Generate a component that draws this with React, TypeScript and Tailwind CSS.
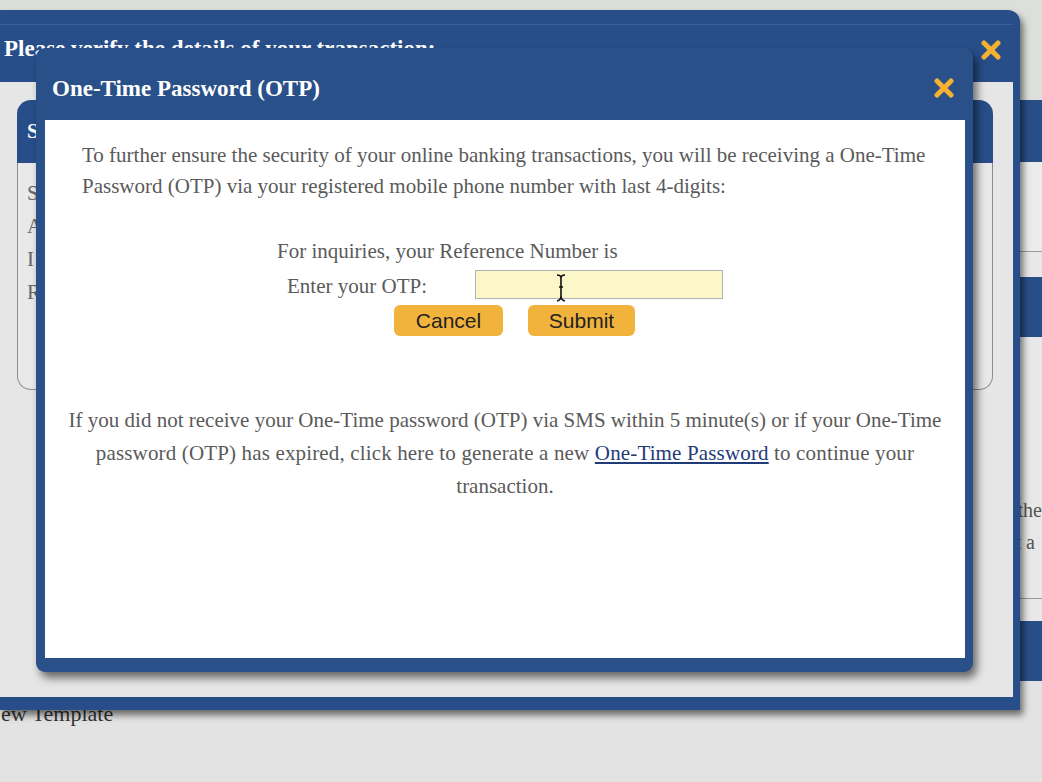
import React from "react";

const serif = { fontFamily: '"Liberation Serif", "Times New Roman", serif' };
const sans = { fontFamily: '"Liberation Sans", Arial, sans-serif' };

function CloseX({ className = "" }: { className?: string }) {
  return (
    <svg width="22" height="20" viewBox="0 0 22 20" className={className}>
      <path d="M4 3 L18 17 M18 3 L4 17" stroke="#f3b231" strokeWidth="5" strokeLinecap="round" />
    </svg>
  );
}

export default function App() {
  return (
    <div className="relative w-[1042px] h-[782px] overflow-hidden bg-[#e3e3e3]" style={serif}>
      {/* background page */}
      <div className="flex w-full h-full">
        <div className="w-[1022px] flex flex-col">
          <div className="h-[10px] bg-[#dcdfdc]" />
          <div className="mt-[691px] -ml-[15px] text-[22px] text-[#333] leading-[26px] whitespace-nowrap">New Template</div>
        </div>
        <div className="flex-1 flex flex-col">
          <div className="h-[100px] bg-[#dcdfdc]" />
          <div className="h-[62px] bg-[#284e89]" />
          <div className="h-[90px] bg-[#ececec] border-b border-[#9a9a9a]" />
          <div className="h-[25px] bg-[#e8e8e8]" />
          <div className="h-[60px] bg-[#284e89]" />
          <div className="bg-[#e8e8e8]">
            <div className="h-[157px]" />
            <div className="text-[20px] leading-[32px] text-[#555] -ml-[1px] whitespace-nowrap">the</div>
            <div className="text-[20px] leading-[32px] text-[#555] -ml-[3px] whitespace-nowrap">t a</div>
            <div className="h-[41px] border-b border-[#9a9a9a]" />
            <div className="h-[22px]" />
          </div>
          <div className="h-[60px] bg-[#284e89]" />
        </div>
      </div>

      {/* outer dialog */}
      <div className="absolute left-0 top-[10px] w-[1020px] h-[700px] bg-[#284e89] rounded-tr-[12px] flex flex-col pr-[7px] pb-[13px] shadow-[3px_5px_7px_rgba(0,0,0,0.55)]">
        <div className="relative h-[72px] shrink-0">
          <div className="h-[15px] border-b border-[#3d6198]" />
          <div className="pl-[4px] pt-[10px] text-[23px] font-bold text-white leading-[27px] whitespace-nowrap">Please verify the details of your transaction:</div>
          <CloseX className="absolute right-[11px] top-[30px]" />
        </div>
        <div className="flex-1 bg-[#e6e6e6] pt-[18px] pl-[17px] pr-[20px]">
          <div className="h-[290px] flex flex-col">
            <div className="h-[63px] bg-[#284e89] rounded-t-[14px] pl-[10px] pt-[19px] text-white font-bold text-[21px] leading-[24px]">S</div>
            <div className="flex-1 bg-[#e9e9e9] border border-t-0 border-[#8e8e8e] rounded-b-[14px] pl-[9px] pt-[14px] text-[21px] leading-[33px] text-[#666]">
              <div>S</div>
              <div>A</div>
              <div>I</div>
              <div>R</div>
            </div>
          </div>
        </div>
      </div>

      {/* inner OTP dialog */}
      <div className="absolute left-[36px] top-[48px] w-[937px] h-[624px] bg-[#2a5089] rounded-[9px] flex flex-col pl-[9px] pr-[8px] pb-[14px] shadow-[4px_6px_8px_rgba(0,0,0,0.55)]">
        <div className="relative h-[72px] shrink-0 flex items-center pl-[7px] pt-[9px]">
          <span className="text-white font-bold text-[23px] leading-[28px]">One-Time Password (OTP)</span>
          <CloseX className="absolute right-[10px] top-[30px]" />
        </div>
        <div className="flex-1 bg-white text-[#5a5a5a]">
          <p className="mt-[20px] pl-[37px] text-[21px] leading-[31px] whitespace-nowrap">
            To further ensure the security of your online banking transactions, you will be receiving a One-Time
            <br />
            Password (OTP) via your registered mobile phone number with last 4-digits:
          </p>
          <div className="mt-[34px] pl-[232px] text-[21px] leading-[30px]">For inquiries, your Reference Number is</div>
          <div className="mt-[4px] flex items-center pl-[242px] h-[29px]">
            <span className="w-[188px] text-[21px] leading-[29px] pt-[3px]">Enter your OTP:</span>
            <div className="relative w-[248px] h-[29px] bg-[#fcf7c8] border border-[#b3b3b3]">
              <svg className="absolute left-[80px] top-[3px]" width="10" height="28" viewBox="0 0 10 28">
                <path d="M1 1 Q5 1 5 4 L5 22 Q5 26 1 27 M9 1 Q5 1 5 4 M5 22 Q5 26 9 27 M3 13 L7 13" stroke="#111" strokeWidth="1.6" fill="none" />
              </svg>
            </div>
          </div>
          <div className="mt-[6px] flex pl-[349px] gap-[25px]" style={sans}>
            <button className="w-[109px] h-[31px] rounded-[6px] bg-[#f2b33d] text-[#222] text-[21px] leading-[31px]">Cancel</button>
            <button className="w-[107px] h-[31px] rounded-[6px] bg-[#f2b33d] text-[#222] text-[21px] leading-[31px]">Submit</button>
          </div>
          <p className="mt-[68px] text-center text-[21px] leading-[33px] whitespace-nowrap">
            If you did not receive your One-Time password (OTP) via SMS within 5 minute(s) or if your One-Time
            <br />
            <span className="tracking-[0.15px]">
              password (OTP) has expired, click here to generate a new{" "}
              <a className="text-[#1f3b78] underline">One-Time Password</a> to continue your
            </span>
            <br />
            transaction.
          </p>
        </div>
      </div>
    </div>
  );
}
